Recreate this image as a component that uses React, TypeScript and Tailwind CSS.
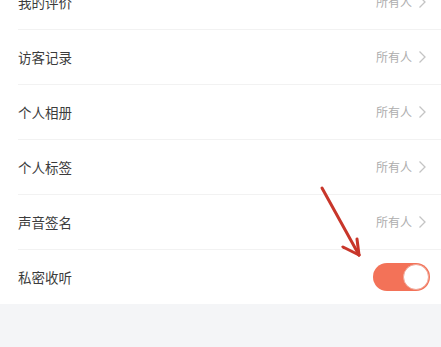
import React from "react";

const rows = [
  { label: "我的评价", value: "所有人" },
  { label: "访客记录", value: "所有人" },
  { label: "个人相册", value: "所有人" },
  { label: "个人标签", value: "所有人" },
  { label: "声音签名", value: "所有人" },
];

function Chevron() {
  return (
    <svg width="9" height="14" viewBox="0 0 9 14" className="ml-[6px]">
      <path d="M1.5 1.5 L7 7 L1.5 12.5" fill="none" stroke="#c4c4c4" strokeWidth="1.3" />
    </svg>
  );
}

export default function App() {
  return (
    <div
      className="relative w-[441px] h-[347px] overflow-hidden bg-[#f4f5f7]"
      style={{ fontFamily: '"Noto Sans CJK SC", "Noto Sans", sans-serif' }}
    >
      <div className="-mt-[25px] bg-white pl-[18px]">
        {rows.map((r) => (
          <div key={r.label} className="flex h-[55px] items-center pr-[14px] border-b border-[#f2f2f2]">
            <span className="text-[13.5px] text-[#3c3c3c]">{r.label}</span>
            <span className="ml-auto text-[12px] text-[#adadad]">{r.value}</span>
            <Chevron />
          </div>
        ))}
        <div className="flex h-[54px] items-center pr-[11px]">
          <span className="text-[13.5px] text-[#3c3c3c]">私密收听</span>
          <div className="ml-auto flex h-[28px] w-[57px] items-center justify-end rounded-full bg-[#f37258] p-[1px]">
            <div className="h-[26px] w-[26px] rounded-full bg-white border border-[#f0a595]" />
          </div>
        </div>
      </div>

      <svg className="absolute left-0 top-0 pointer-events-none" width="441" height="347">
        <g stroke="#c8362a" strokeWidth="3" strokeLinecap="round" fill="none">
          <line x1="322" y1="188" x2="359" y2="255" />
          <line x1="359" y1="255" x2="343" y2="247" />
          <line x1="359" y1="255" x2="357" y2="239" />
        </g>
      </svg>
    </div>
  );
}
